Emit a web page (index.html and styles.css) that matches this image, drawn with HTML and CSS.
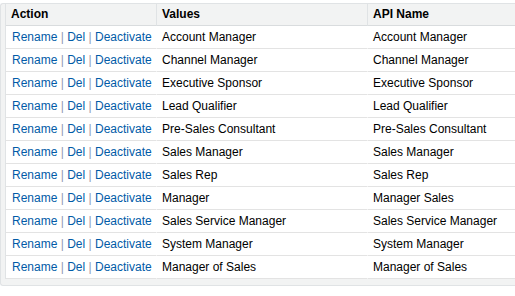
FILE: index.html
```html
<!DOCTYPE html>
<html>
<head>
<meta charset="utf-8">
<link rel="stylesheet" href="styles.css">
</head>
<body>
<div class="panel">
  <table class="list">
    <thead>
      <tr>
        <th class="c-action">Action</th>
        <th class="c-value">Values</th>
        <th class="c-api">API Name</th>
      </tr>
    </thead>
    <tbody>
      <tr><td><a href="#">Rename</a><span class="sep"> | </span><a href="#">Del</a><span class="sep"> | </span><a href="#">Deactivate</a></td><td>Account Manager</td><td>Account Manager</td></tr>
      <tr><td><a href="#">Rename</a><span class="sep"> | </span><a href="#">Del</a><span class="sep"> | </span><a href="#">Deactivate</a></td><td>Channel Manager</td><td>Channel Manager</td></tr>
      <tr><td><a href="#">Rename</a><span class="sep"> | </span><a href="#">Del</a><span class="sep"> | </span><a href="#">Deactivate</a></td><td>Executive Sponsor</td><td>Executive Sponsor</td></tr>
      <tr><td><a href="#">Rename</a><span class="sep"> | </span><a href="#">Del</a><span class="sep"> | </span><a href="#">Deactivate</a></td><td>Lead Qualifier</td><td>Lead Qualifier</td></tr>
      <tr><td><a href="#">Rename</a><span class="sep"> | </span><a href="#">Del</a><span class="sep"> | </span><a href="#">Deactivate</a></td><td>Pre-Sales Consultant</td><td>Pre-Sales Consultant</td></tr>
      <tr><td><a href="#">Rename</a><span class="sep"> | </span><a href="#">Del</a><span class="sep"> | </span><a href="#">Deactivate</a></td><td>Sales Manager</td><td>Sales Manager</td></tr>
      <tr><td><a href="#">Rename</a><span class="sep"> | </span><a href="#">Del</a><span class="sep"> | </span><a href="#">Deactivate</a></td><td>Sales Rep</td><td>Sales Rep</td></tr>
      <tr><td><a href="#">Rename</a><span class="sep"> | </span><a href="#">Del</a><span class="sep"> | </span><a href="#">Deactivate</a></td><td>Manager</td><td>Manager Sales</td></tr>
      <tr><td><a href="#">Rename</a><span class="sep"> | </span><a href="#">Del</a><span class="sep"> | </span><a href="#">Deactivate</a></td><td>Sales Service Manager</td><td>Sales Service Manager</td></tr>
      <tr><td><a href="#">Rename</a><span class="sep"> | </span><a href="#">Del</a><span class="sep"> | </span><a href="#">Deactivate</a></td><td>System Manager</td><td>System Manager</td></tr>
      <tr><td><a href="#">Rename</a><span class="sep"> | </span><a href="#">Del</a><span class="sep"> | </span><a href="#">Deactivate</a></td><td>Manager of Sales</td><td>Manager of Sales</td></tr>
    </tbody>
  </table>
</div>
</body>
</html>
```
FILE: styles.css
```css
html, body {
  margin: 0;
  padding: 0;
  overflow: hidden;
  background: #ffffff;
}
body {
  padding-top: 3px;
  width: 515px;
  font-family: Arial, "Liberation Sans", sans-serif;
  font-size: 12px;
  color: #000;
}
.panel {
  box-sizing: border-box;
  width: 515px;
  background: #f2f3f3;
  border: 1px solid #e0e3e5;
  border-right: none;
  border-radius: 3px 0 0 3px;
  padding: 0 0 6px 4px;
}
.list {
  border-collapse: separate;
  border-spacing: 0;
  table-layout: fixed;
  width: 100%;
  border-left: 1px solid #e0e3e5;
}
.list th, .list td {
  text-align: left;
  padding: 0 5px;
  white-space: nowrap;
  overflow: hidden;
  border-right: 1px solid #e0e3e5;
}
.list th {
  font-weight: bold;
  line-height: 21px;
  height: 21px;
  background: #f2f3f3;
  border-bottom: 1px solid #d9dcde;
  color: #000;
}
.list th.c-api { border-right: none; }
.c-action { width: 140px; }
.c-value { width: 200px; }
.list td {
  background: #ffffff;
  line-height: 22px;
  height: 22px;
  border-bottom: 1px solid #e3e3e3;
  border-right-color: #ffffff;
}
.list td:last-child { border-right: none; }
.list td:first-child { padding-left: 6px; padding-right: 4px; }
.list a {
  color: #015ba7;
  text-decoration: none;
}
.sep {
  color: #8f9bb3;
}
```
